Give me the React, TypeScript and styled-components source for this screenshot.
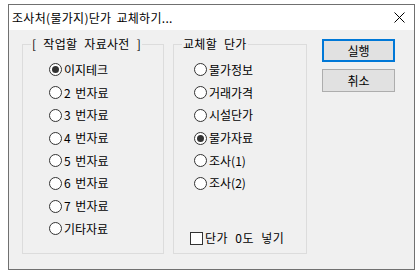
import styled, { createGlobalStyle } from 'styled-components';

const GlobalStyle = createGlobalStyle`
    html, body {
        margin: 0;
        padding: 0;
        background: #ffffff;
    }
    body {
        font-family: "Noto Sans CJK KR", "Noto Sans", sans-serif;
        font-size: 12px;
        color: #000000;
        word-spacing: 2px;
    }
`;

const Screen = styled.div`
    width: 417px;
    height: 271px;
    padding: 4px 0 0 8px;
    box-sizing: border-box;
    overflow: hidden;
`;

const Window = styled.div`
    width: 407px;
    height: 266px;
    box-sizing: border-box;
    border: 1px solid #707070;
    background: #f0f0f0;
    display: flex;
    flex-direction: column;
`;

const TitleBar = styled.div`
    height: 25px;
    flex: none;
    background: #ffffff;
    display: flex;
    align-items: center;
    justify-content: space-between;
    padding-left: 3px;
`;

const Title = styled.span`
    font-size: 12px;
    line-height: 16px;
    letter-spacing: 0.3px;
`;

const CloseBox = styled.div`
    width: 30px;
    height: 25px;
    display: flex;
    align-items: center;
    justify-content: center;
`;

const Body = styled.div`
    display: flex;
    align-items: flex-start;
    padding: 6px 0 0 13px;
`;

const Group = styled.fieldset<{ $width: number; $gapRight: number }>`
    margin: 0 ${p => p.$gapRight}px 0 0;
    padding: 0 0 0 8px;
    width: ${p => p.$width}px;
    height: 218px;
    min-width: 0;
    box-sizing: border-box;
    border: 1px solid #dcdcdc;
`;

const Legend = styled.legend`
    padding: 0 1px;
    font-size: 12px;
    line-height: 16px;
    word-spacing: 4px;
    letter-spacing: 0.3px;
`;

const OptionList = styled.div<{ $indent: number }>`
    display: flex;
    flex-direction: column;
    padding: 6.65px 0 0 ${p => p.$indent}px;
`;

const Option = styled.label`
    height: 22.7px;
    display: flex;
    align-items: center;
    gap: 2px;
    font-size: 12px;
    line-height: 16px;
    white-space: nowrap;
`;

const RadioMark = styled.span<{ $checked?: boolean }>`
    width: 13px;
    height: 13px;
    box-sizing: border-box;
    border: 1px solid #333333;
    border-radius: 50%;
    background: #ffffff;
    display: flex;
    align-items: center;
    justify-content: center;
    flex: none;

    &::after {
        content: '';
        width: 7px;
        height: 7px;
        border-radius: 50%;
        background: #333333;
        display: ${p => (p.$checked ? 'block' : 'none')};
    }
`;

const CheckRow = styled(Option)`
    margin: 32px 0 0 -4px;
    word-spacing: 4px;
    letter-spacing: 0.5px;
`;

const CheckMark = styled.span`
    width: 13px;
    height: 13px;
    box-sizing: border-box;
    border: 1px solid #333333;
    background: #ffffff;
    flex: none;
`;

const ButtonColumn = styled.div`
    display: flex;
    flex-direction: column;
    gap: 7px;
    margin: 3px 0 0 15px;
`;

const DialogButton = styled.button<{ $default?: boolean }>`
    width: 73px;
    height: 23px;
    box-sizing: border-box;
    padding: 0;
    font-family: "Noto Sans CJK KR", "Noto Sans", sans-serif;
    font-size: 12px;
    line-height: 16px;
    color: #000000;
    background: #e1e1e1;
    border: ${p => (p.$default ? '2px solid #0078d7' : '1px solid #adadad')};
`;

const leftItems = ['이지테크', '2 번자료', '3 번자료', '4 번자료', '5 번자료', '6 번자료', '7 번자료', '기타자료'];
const rightItems = ['물가정보', '거래가격', '시설단가', '물가자료', '조사(1)', '조사(2)'];

export default function App() {
    return (
        <Screen>
            <GlobalStyle />
            <Window>
                <TitleBar>
                    <Title>조사처(물가지)단가 교체하기...</Title>
                    <CloseBox>
                        <svg width="11" height="11" viewBox="0 0 11 11">
                            <path d="M0.5 0.5 L10.5 10.5 M10.5 0.5 L0.5 10.5" stroke="#000" strokeWidth="1" fill="none" />
                        </svg>
                    </CloseBox>
                </TitleBar>
                <Body>
                    <Group $width={142} $gapRight={9}>
                        <Legend>[ 작업할 자료사전 ]</Legend>
                        <OptionList $indent={18}>
                            {leftItems.map((item, i) => (
                                <Option key={item}>
                                    <RadioMark $checked={i === 0} />
                                    {item}
                                </Option>
                            ))}
                        </OptionList>
                    </Group>
                    <Group $width={134} $gapRight={0}>
                        <Legend>교체할 단가</Legend>
                        <OptionList $indent={12}>
                            {rightItems.map((item, i) => (
                                <Option key={item}>
                                    <RadioMark $checked={i === 3} />
                                    {item}
                                </Option>
                            ))}
                            <CheckRow>
                                <CheckMark />
                                단가 0도 넣기
                            </CheckRow>
                        </OptionList>
                    </Group>
                    <ButtonColumn>
                        <DialogButton $default>실행</DialogButton>
                        <DialogButton>취소</DialogButton>
                    </ButtonColumn>
                </Body>
            </Window>
        </Screen>
    );
}
